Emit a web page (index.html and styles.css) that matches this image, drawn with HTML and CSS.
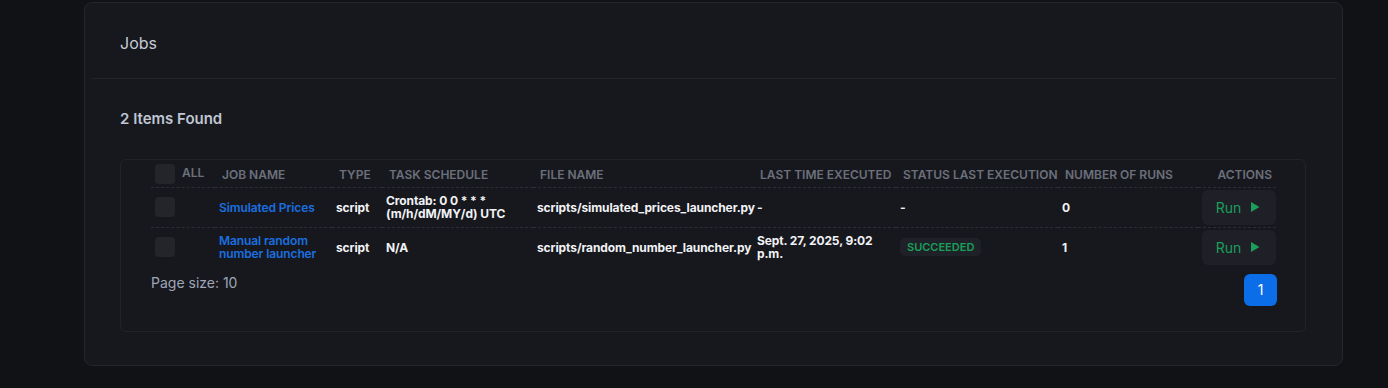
FILE: index.html
```html
<!DOCTYPE html>
<html lang="en">
<head>
    <meta charset="UTF-8">
    <meta name="viewport" content="width=device-width, initial-scale=1.0">
    <title>Jobs</title>
    <link rel="stylesheet" href="styles.css">
</head>
<body>
    <div class="card">
        <div class="card-header">
            <h1>Jobs</h1>
        </div>

        <div class="card-body">
            <h2 class="found">2 Items Found</h2>

            <div class="table-card">
                <table class="jobs-table">
                    <colgroup>
                        <col style="width: 64px">
                        <col style="width: 117px">
                        <col style="width: 50px">
                        <col style="width: 151px">
                        <col style="width: 220px">
                        <col style="width: 143px">
                        <col style="width: 162px">
                        <col style="width: 140px">
                        <col style="width: 78px">
                    </colgroup>
                    <thead>
                        <tr>
                            <th class="check-col">
                                <span class="checkbox"></span>
                                <span class="all">All</span>
                            </th>
                            <th>Job Name</th>
                            <th>Type</th>
                            <th>Task Schedule</th>
                            <th>File Name</th>
                            <th>Last Time Executed</th>
                            <th>Status Last Execution</th>
                            <th>Number of Runs</th>
                            <th class="right">Actions</th>
                        </tr>
                    </thead>
                    <tbody>
                        <tr>
                            <td><span class="checkbox"></span></td>
                            <td><a href="#">Simulated Prices</a></td>
                            <td>script</td>
                            <td>Crontab: 0 0 * * *<br>(m/h/dM/MY/d) UTC</td>
                            <td>scripts/simulated_prices_launcher.py</td>
                            <td>-</td>
                            <td>-</td>
                            <td>0</td>
                            <td class="action-cell">
                                <button class="btn-run">Run
                                    <svg viewBox="0 0 10 12"><path d="M1 1l8.5 5-8.5 5z" fill="currentColor"/></svg>
                                </button>
                            </td>
                        </tr>
                        <tr>
                            <td><span class="checkbox"></span></td>
                            <td><a href="#">Manual random number launcher</a></td>
                            <td>script</td>
                            <td>N/A</td>
                            <td>scripts/random_number_launcher.py</td>
                            <td>Sept. 27, 2025, 9:02 p.m.</td>
                            <td><span class="badge">Succeeded</span></td>
                            <td>1</td>
                            <td class="action-cell">
                                <button class="btn-run">Run
                                    <svg viewBox="0 0 10 12"><path d="M1 1l8.5 5-8.5 5z" fill="currentColor"/></svg>
                                </button>
                            </td>
                        </tr>
                    </tbody>
                </table>

                <div class="table-footer">
                    <span class="page-size">Page size: 10</span>
                    <button class="page-btn">1</button>
                </div>
            </div>
        </div>
    </div>
</body>
</html>
```

FILE: styles.css
```css
:root {
    --page-bg: #111216;
    --card-bg: #17181d;
    --card-border: #25262b;
    --inner-border: #222329;
    --muted: #6c707c;
    --heading: #c4c9d6;
    --text: #f1f2f5;
    --link: #1a6fe0;
    --green: #1a9f5a;
    --control: #24252b;
    --button-bg: #1f2027;
    --primary: #0b6de8;
}

* {
    margin: 0;
    padding: 0;
    box-sizing: border-box;
    font-family: Inter, "Noto Sans", sans-serif;
}

body {
    background-color: var(--page-bg);
    padding: 2px 45px 0 84px;
}

.card {
    background-color: var(--card-bg);
    border: 1px solid var(--card-border);
    border-radius: 8px;
    width: 1259px;
    height: 364px;
}

.card-header {
    margin: 0 6px;
    padding: 4px 30px 0 29px;
    height: 76px;
    display: flex;
    align-items: center;
    border-bottom: 1px solid var(--inner-border);
}

.card-header h1 {
    font-size: 16px;
    font-weight: 400;
    color: var(--heading);
}

.card-body {
    padding: 30px 36px 0 35px;
}

.found {
    font-size: 15px;
    font-weight: 600;
    line-height: 20px;
    color: #bfc5d2;
    margin-bottom: 30px;
}

.table-card {
    border: 1px solid var(--inner-border);
    border-radius: 6px;
    padding: 1px 29px 25px 30px;
}

.jobs-table {
    table-layout: fixed;
    border-collapse: collapse;
    width: 1125px;
}

.jobs-table th {
    text-align: left;
    font-size: 12px;
    font-weight: 600;
    text-transform: uppercase;
    color: var(--muted);
    padding: 1px 4px 0 7px;
    height: 26px;
    white-space: nowrap;
    vertical-align: middle;
}

.jobs-table th.right {
    text-align: right;
    padding-right: 4px;
}

.jobs-table th.check-col {
    padding-left: 4px;
}

.check-col .all {
    display: inline-block;
    vertical-align: middle;
    margin-left: 4px;
    margin-top: -3px;
}

.jobs-table td {
    font-size: 12px;
    font-weight: 700;
    line-height: 13px;
    letter-spacing: -0.1px;
    color: var(--text);
    padding: 2px 4px;
    height: 38px;
    vertical-align: middle;
    border-top: 1px dashed #2c2e35;
}

.jobs-table td.action-cell {
    padding-right: 0;
}

.jobs-table a {
    color: var(--link);
    text-decoration: none;
    font-weight: 600;
}

.checkbox {
    display: inline-block;
    width: 20px;
    height: 20px;
    border-radius: 4px;
    background-color: var(--control);
    vertical-align: middle;
}

.badge {
    display: inline-block;
    background-color: #1f2128;
    color: var(--green);
    font-size: 11px;
    font-weight: 600;
    letter-spacing: 0;
    text-transform: uppercase;
    padding: 3px 7px;
    border-radius: 5px;
    line-height: 12px;
}

.btn-run {
    width: 74px;
    height: 35px;
    border: none;
    border-radius: 6px;
    background-color: var(--button-bg);
    color: var(--green);
    font-size: 14px;
    font-weight: 400;
    display: flex;
    align-items: center;
    justify-content: center;
    gap: 9px;
    padding-right: 2px;
    cursor: pointer;
}

.btn-run svg {
    width: 10px;
    height: 12px;
}

.table-footer {
    display: flex;
    justify-content: space-between;
    align-items: flex-start;
    margin-top: 6px;
}

.page-size {
    font-size: 14px;
    line-height: 20px;
    color: #9ea6b8;
}

.page-btn {
    width: 33px;
    height: 32px;
    margin-top: 1px;
    margin-right: -1px;
    border: none;
    border-radius: 6px;
    background-color: var(--primary);
    color: #fff;
    font-size: 14px;
    cursor: pointer;
}
```
